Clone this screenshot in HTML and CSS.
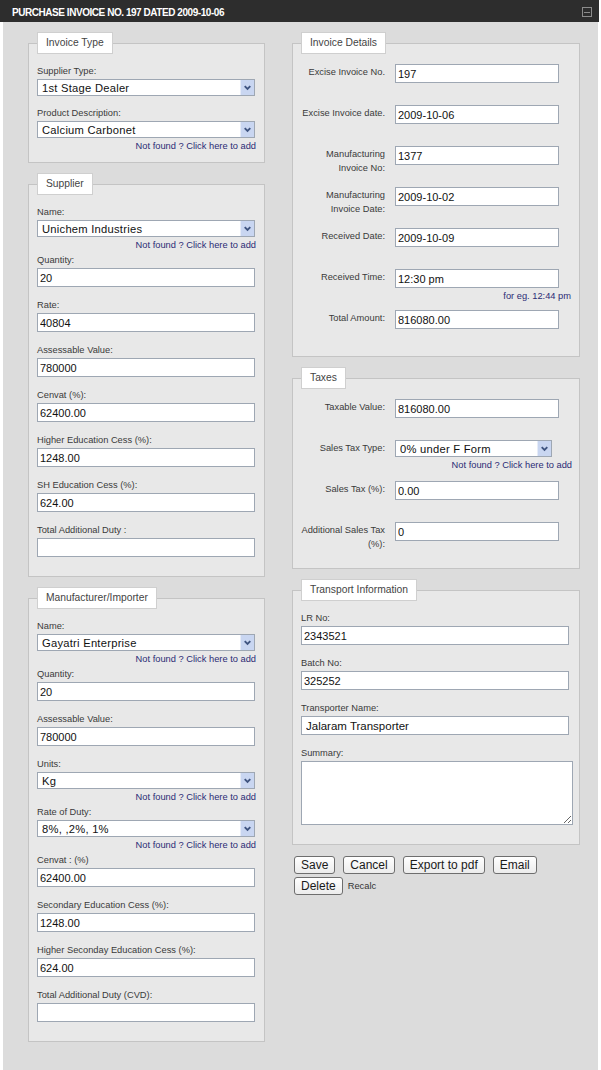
FILE: index.html
```html
<!DOCTYPE html>
<html>
<head>
<meta charset="utf-8">
<title>Purchase Invoice</title>
<link rel="stylesheet" href="styles.css">
</head>
<body>
<div class="window">
  <div class="titlebar">
    <span class="title">PURCHASE INVOICE NO. 197 DATED 2009-10-06</span>
    <span class="min-icon"></span>
  </div>
  <div class="panel">
    <div class="col col-left">
      <fieldset class="box">
        <legend>Invoice Type</legend>
        <div class="field sel">
          <label>Supplier Type:</label>
          <div class="select"><select><option>1st Stage Dealer</option></select><span class="arrow"><svg width="14" height="15" viewBox="0 0 14 15"><path d="M4 6 L7 9 L10 6" stroke="#3f5480" stroke-width="2" fill="none"/></svg></span></div>
        </div>
        <div class="field has-link">
          <label>Product Description:</label>
          <div class="select"><select><option>Calcium Carbonet</option></select><span class="arrow"><svg width="14" height="15" viewBox="0 0 14 15"><path d="M4 6 L7 9 L10 6" stroke="#3f5480" stroke-width="2" fill="none"/></svg></span></div>
          <a class="add-link">Not found ? Click here to add</a>
        </div>
      </fieldset>

      <fieldset class="box">
        <legend>Supplier</legend>
        <div class="field has-link">
          <label>Name:</label>
          <div class="select"><select><option>Unichem Industries</option></select><span class="arrow"><svg width="14" height="15" viewBox="0 0 14 15"><path d="M4 6 L7 9 L10 6" stroke="#3f5480" stroke-width="2" fill="none"/></svg></span></div>
          <a class="add-link">Not found ? Click here to add</a>
        </div>
        <div class="field"><label>Quantity:</label><input type="text" value="20"></div>
        <div class="field"><label>Rate:</label><input type="text" value="40804"></div>
        <div class="field"><label>Assessable Value:</label><input type="text" value="780000"></div>
        <div class="field"><label>Cenvat (%):</label><input type="text" value="62400.00"></div>
        <div class="field"><label>Higher Education Cess (%):</label><input type="text" value="1248.00"></div>
        <div class="field"><label>SH Education Cess (%):</label><input type="text" value="624.00"></div>
        <div class="field"><label>Total Additional Duty :</label><input type="text" value=""></div>
      </fieldset>

      <fieldset class="box">
        <legend>Manufacturer/Importer</legend>
        <div class="field has-link">
          <label>Name:</label>
          <div class="select"><select><option>Gayatri Enterprise</option></select><span class="arrow"><svg width="14" height="15" viewBox="0 0 14 15"><path d="M4 6 L7 9 L10 6" stroke="#3f5480" stroke-width="2" fill="none"/></svg></span></div>
          <a class="add-link">Not found ? Click here to add</a>
        </div>
        <div class="field"><label>Quantity:</label><input type="text" value="20"></div>
        <div class="field"><label>Assessable Value:</label><input type="text" value="780000"></div>
        <div class="field has-link">
          <label>Units:</label>
          <div class="select"><select><option>Kg</option></select><span class="arrow"><svg width="14" height="15" viewBox="0 0 14 15"><path d="M4 6 L7 9 L10 6" stroke="#3f5480" stroke-width="2" fill="none"/></svg></span></div>
          <a class="add-link">Not found ? Click here to add</a>
        </div>
        <div class="field has-link">
          <label>Rate of Duty:</label>
          <div class="select"><select><option>8%, ,2%, 1%</option></select><span class="arrow"><svg width="14" height="15" viewBox="0 0 14 15"><path d="M4 6 L7 9 L10 6" stroke="#3f5480" stroke-width="2" fill="none"/></svg></span></div>
          <a class="add-link">Not found ? Click here to add</a>
        </div>
        <div class="field"><label>Cenvat : (%)</label><input type="text" value="62400.00"></div>
        <div class="field"><label>Secondary Education Cess (%):</label><input type="text" value="1248.00"></div>
        <div class="field"><label>Higher Seconday Education Cess (%):</label><input type="text" value="624.00"></div>
        <div class="field"><label>Total Additional Duty (CVD):</label><input type="text" value=""></div>
      </fieldset>
    </div>

    <div class="col col-right">
      <fieldset class="box rows">
        <legend>Invoice Details</legend>
        <div class="row"><label class="rlabel">Excise Invoice No.</label><div class="cell"><input type="text" value="197"></div></div>
        <div class="row"><label class="rlabel">Excise Invoice date.</label><div class="cell"><input type="text" value="2009-10-06"></div></div>
        <div class="row"><label class="rlabel">Manufacturing Invoice No:</label><div class="cell"><input type="text" value="1377"></div></div>
        <div class="row"><label class="rlabel">Manufacturing Invoice Date:</label><div class="cell"><input type="text" value="2009-10-02"></div></div>
        <div class="row"><label class="rlabel">Received Date:</label><div class="cell"><input type="text" value="2009-10-09"></div></div>
        <div class="row"><label class="rlabel">Received Time:</label><div class="cell"><input type="text" value="12:30 pm"><span class="hint">for eg. 12:44 pm</span></div></div>
        <div class="row"><label class="rlabel">Total Amount:</label><div class="cell"><input type="text" value="816080.00"></div></div>
      </fieldset>

      <fieldset class="box rows">
        <legend>Taxes</legend>
        <div class="row"><label class="rlabel">Taxable Value:</label><div class="cell"><input type="text" value="816080.00"></div></div>
        <div class="row"><label class="rlabel">Sales Tax Type:</label><div class="cell">
          <div class="select narrow"><select><option>0% under F Form</option></select><span class="arrow"><svg width="14" height="15" viewBox="0 0 14 15"><path d="M4 6 L7 9 L10 6" stroke="#3f5480" stroke-width="2" fill="none"/></svg></span></div>
          <a class="add-link">Not found ? Click here to add</a>
        </div></div>
        <div class="row"><label class="rlabel">Sales Tax (%):</label><div class="cell"><input type="text" value="0.00"></div></div>
        <div class="row"><label class="rlabel">Additional Sales Tax (%):</label><div class="cell"><input type="text" value="0"></div></div>
      </fieldset>

      <fieldset class="box transport">
        <legend>Transport Information</legend>
        <div class="field"><label>LR No:</label><input type="text" value="2343521"></div>
        <div class="field"><label>Batch No:</label><input type="text" value="325252"></div>
        <div class="field"><label>Transporter Name:</label><input type="text" class="big" value="Jalaram Transporter"></div>
        <div class="field"><label>Summary:</label><textarea></textarea></div>
      </fieldset>

      <div class="actions">
        <button>Save</button>
        <button>Cancel</button>
        <button>Export to pdf</button>
        <button>Email</button>
        <button>Delete</button>
        <span class="recalc">Recalc</span>
      </div>
    </div>
  </div>
</div>
</body>
</html>
```

FILE: styles.css
```css
* { box-sizing: border-box; }

body {
  margin: 0;
  background: #ffffff;
  font-family: "Liberation Sans", Arial, sans-serif;
}

.window {
  width: 599px;
}

.titlebar {
  height: 22px;
  background: #2d2d2d;
  display: flex;
  align-items: center;
  justify-content: space-between;
  padding: 0 7px 0 12px;
}

.title {
  color: #ffffff;
  font-weight: bold;
  font-size: 10px;
  letter-spacing: -0.45px;
  padding-top: 3px;
}

.min-icon {
  width: 10px;
  height: 10px;
  border: 1px solid #8c8c8c;
  display: flex;
  align-items: center;
  justify-content: center;
  margin-top: 2px;
}

.min-icon::before {
  content: "";
  width: 6px;
  height: 1px;
  background: #8c8c8c;
}

.panel {
  margin: 0 1px 0 3px;
  background: #dcdcdc;
  padding: 10px 18px 28px 25px;
  display: flex;
  gap: 27px;
  align-items: flex-start;
}

.col-left { width: 237px; }
.col-right { width: 288px; }

.box {
  margin: 0 0 10px 0;
  padding: 10px 9px 8px 8px;
  border: 1px solid #c4c4c4;
  background: #e8e8e8;
  min-width: 0;
}

.box:last-child { margin-bottom: 0; }

.box legend {
  background: #ffffff;
  border: 1px solid #cfcfcf;
  height: 22px;
  line-height: 20px;
  padding: 0 8px;
  font-size: 10.3px;
  color: #444444;
}

.field {
  margin-bottom: 11px;
}

.field.sel { margin-bottom: 10px; }
.field.has-link { margin-bottom: 2px; }

.field label {
  display: block;
  font-size: 9.3px;
  line-height: 14px;
  margin-bottom: 1px;
  color: #3a3a3a;
}

input[type="text"] {
  display: block;
  width: 218px;
  height: 19px;
  margin: 0;
  border: 1px solid #9ea7b3;
  background: #ffffff;
  padding: 0 2px;
  font-family: "Liberation Sans", Arial, sans-serif;
  font-size: 11px;
  color: #111111;
}

input.big { font-size: 11.5px; padding-left: 4px; }

.select {
  display: flex;
  width: 218px;
  height: 17px;
  border: 1px solid #9ea7b3;
  background: #ffffff;
}

.select select {
  appearance: none;
  -webkit-appearance: none;
  flex: 1;
  min-width: 0;
  border: 0;
  background: transparent;
  height: 15px;
  padding: 0 0 0 4px;
  font-family: "Liberation Sans", Arial, sans-serif;
  font-size: 11.2px;
  letter-spacing: 0.25px;
  color: #111111;
  outline: none;
}

.select .arrow {
  width: 14px;
  height: 15px;
  background: #c9d6f1;
  border-left: 1px solid #e6ecf8;
  display: flex;
}

.add-link {
  display: block;
  text-align: right;
  font-size: 9.3px;
  line-height: 12px;
  margin-top: 2px;
  margin-right: -1px;
  color: #2b2b75;
}

/* right column row fieldsets */
.box.rows {
  padding: 10px 8px 5px 8px;
}

.row {
  display: grid;
  grid-template-columns: 84px 176px;
  column-gap: 10px;
  min-height: 41px;
  align-items: start;
}

.rlabel {
  text-align: right;
  font-size: 9.3px;
  line-height: 14px;
  padding-top: 1px;
  color: #3a3a3a;
}

.cell input[type="text"] { width: 164px; }
.cell .select { width: 157px; }

.hint {
  display: block;
  text-align: right;
  font-size: 9.3px;
  line-height: 12px;
  margin-top: 2px;
  color: #2b2b75;
}

.box.transport {
  padding: 10px 7px 8px 8px;
}

.transport input[type="text"] { width: 268px; }

textarea {
  display: block;
  width: 272px;
  height: 64px;
  margin: 0;
  border: 1px solid #9ea7b3;
  background: #ffffff;
}

.actions {
  display: flex;
  flex-wrap: wrap;
  align-items: center;
  gap: 3px 8px;
  margin: 11px 0 0 2px;
}

.actions button {
  height: 18px;
  padding: 0 6px;
  border: 1px solid #6e6e6e;
  border-radius: 3px;
  background: linear-gradient(#ffffff, #ececec);
  font-family: "Liberation Sans", Arial, sans-serif;
  font-size: 12px;
  color: #1a1a1a;
  line-height: 16px;
}

.recalc {
  font-size: 9.3px;
  color: #333333;
  margin-left: -3px;
}
```
